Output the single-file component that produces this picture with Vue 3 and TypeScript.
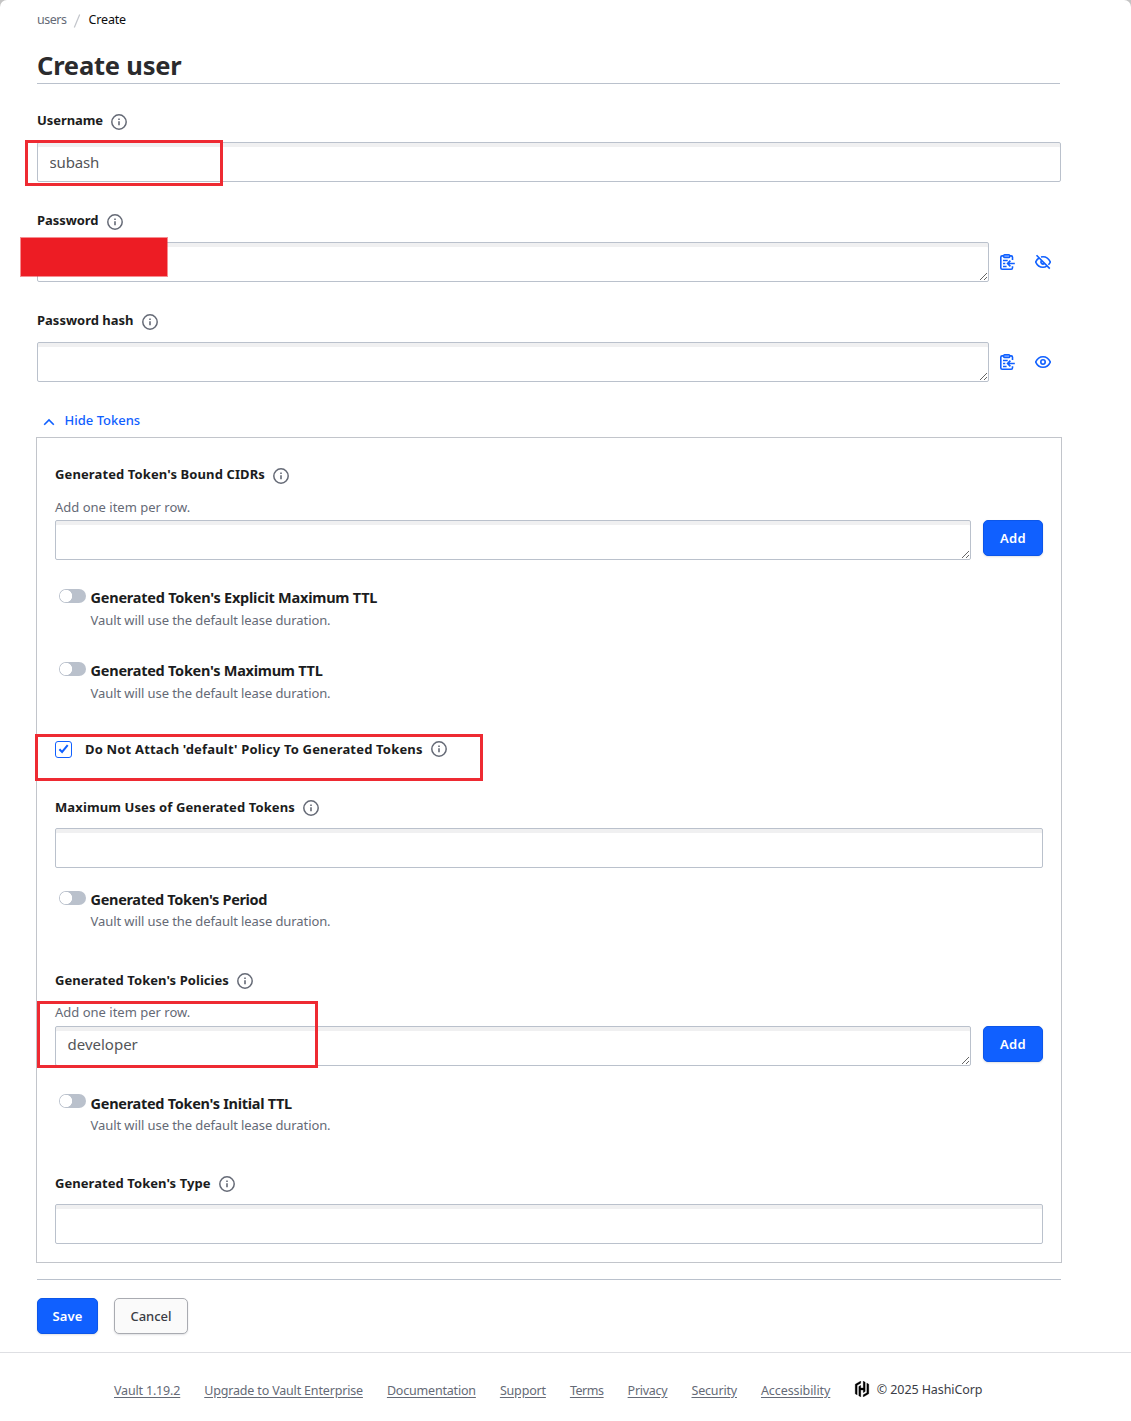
<script setup lang="ts">
import { ref, h, type FunctionalComponent } from 'vue'

// Small "i in a circle" hint icon shown after labels
const InfoIcon: FunctionalComponent = () =>
  h('svg', { class: 'info', width: 16, height: 16, viewBox: '0 0 16 16', fill: 'none' }, [
    h('circle', { cx: 8, cy: 8, r: 7.2, stroke: '#656a76', 'stroke-width': 1.5 }),
    h('path', { d: 'M8 7.3v4', stroke: '#656a76', 'stroke-width': 1.6 }),
    h('path', { d: 'M7.2 4.4h1.6v1.5H7.2z', fill: '#656a76' }),
  ])

interface Tracked { text: string; ls: number }
interface Secret { label: Tracked; value: string; visible: boolean }

const username = ref('subash')
const policies = ref('developer')
const cidrs = ref('')
const maxUses = ref('')
const tokenType = ref('')
const noDefault = ref(true)

const secrets = ref<Secret[]>([
  { label: { text: 'Password', ls: -0.05 }, value: '', visible: false },
  { label: { text: 'Password hash', ls: 0 }, value: '', visible: true },
])

const maxTtls: Tracked[] = [
  { text: "Generated Token's Explicit Maximum TTL", ls: -0.24 },
  { text: "Generated Token's Maximum TTL", ls: -0.26 },
]

const links: Tracked[] = [
  { text: 'Vault 1.19.2', ls: -0.17 },
  { text: 'Upgrade to Vault Enterprise', ls: -0.17 },
  { text: 'Documentation', ls: -0.19 },
  { text: 'Support', ls: -0.17 },
  { text: 'Terms', ls: -0.45 },
  { text: 'Privacy', ls: -0.26 },
  { text: 'Security', ls: -0.18 },
  { text: 'Accessibility', ls: -0.09 },
]

const track = (ls: number) => ({ letterSpacing: ls + 'px' })
</script>

<template>
  <div class="page">
    <main class="content">
      <nav class="crumbs">
        <a class="crumb">users</a><svg class="slash" width="8" height="14" viewBox="0 0 8 14"><path d="M1.3 13.5 6.7.5" stroke="#c2c5cb" stroke-width="1.2" /></svg><span class="crumb current">Create</span>
      </nav>
      <h1>Create user</h1>

      <div class="field">
        <div class="label low"><span :style="track(-0.07)">Username</span><InfoIcon /></div>
        <input v-model="username" class="control" type="text" />
      </div>

      <div v-for="s in secrets" :key="s.label.text" class="field">
        <div class="label low"><span :style="track(s.label.ls)">{{ s.label.text }}</span><InfoIcon /></div>
        <div class="secret">
          <textarea v-model="s.value" class="control"></textarea>
          <div class="icons">
            <svg width="16" height="16" viewBox="0 0 16 16" fill="none" stroke="#1060ff" stroke-width="1.6">
              <path d="M5 1.900H3.100c-.9 0-1.300.5-1.300 1.300v10.600c0 .9.5 1.400 1.300 1.400h9.100c.9 0 1.300-.5 1.300-1.400v-1.600M11 1.900h1.200c.9 0 1.300.5 1.300 1.300v2.700" />
              <rect x="4.700" y=".8" width="6" height="2.700" rx=".8" fill="#8cb2ff" stroke-width="1.400" />
              <path d="M4 6.500h4.700M4 9.500h2.300M4 12.400h3.600" stroke-width="1.500" />
              <path d="M15.800 9.500H9M11.400 6.600 8.600 9.500l2.800 2.900" stroke-width="1.700" />
            </svg>
            <svg v-if="s.visible" width="16" height="16" viewBox="0 0 16 16" fill="none" stroke="#1060ff" stroke-width="1.6">
              <path d="M.7 8C2.200 4.600 4.900 2.800 8 2.800s5.800 1.800 7.300 5.200c-1.500 3.400-4.200 5.200-7.300 5.200S2.200 11.400.7 8z" />
              <circle cx="8" cy="8" r="2.200" />
            </svg>
            <svg v-else width="16" height="16" viewBox="0 0 16 16" fill="none" stroke="#1060ff" stroke-width="1.6">
              <path d="M6 3.100c.7-.2 1.300-.3 2-.3 3.100 0 5.800 1.800 7.300 5.200-.5 1.100-1.100 2-1.900 2.800M4 4C2.600 4.900 1.500 6.200.7 8c1.500 3.400 4.200 5.200 7.300 5.200 1.400 0 2.700-.4 3.800-1.100" />
              <path d="M6.300 6.600a2.200 2.200 0 0 0 3 3.100M1.500 1.200l13.300 13.400" />
            </svg>
          </div>
        </div>
      </div>

      <button class="disclosure" type="button">
        <svg width="12" height="12" viewBox="0 0 12 12" fill="none" stroke="#1060ff" stroke-width="1.6"><path d="M1.200 8.800 6 3.900l4.800 4.900" /></svg>
        <span>Hide Tokens</span>
      </button>

      <section class="tokens">
        <div class="label low"><span :style="track(0.11)">Generated Token's Bound CIDRs</span><InfoIcon /></div>
        <p class="help first">Add one item per row.</p>
        <div class="adder">
          <textarea v-model="cidrs" class="control"></textarea>
          <button class="btn primary add" type="button">Add</button>
        </div>

        <div v-for="t in maxTtls" :key="t.text" class="ttl">
          <span class="switch"></span>
          <div><h3 :style="track(t.ls)">{{ t.text }}</h3><p>Vault will use the default lease duration.</p></div>
        </div>

        <div class="check-row">
          <button class="checkbox" type="button" role="checkbox" :aria-checked="noDefault" @click="noDefault = !noDefault">
            <svg v-if="noDefault" width="15" height="15" viewBox="0 0 15 15" fill="none" stroke="#1060ff" stroke-width="2"><path d="m3.400 7.200 2.700 2.700 5.600-6.700" /></svg>
          </button>
          <div class="label"><span :style="track(0.18)">Do Not Attach 'default' Policy To Generated Tokens</span><InfoIcon /></div>
        </div>

        <div class="label mid uses"><span :style="track(0.11)">Maximum Uses of Generated Tokens</span><InfoIcon /></div>
        <input v-model="maxUses" class="control" type="text" />

        <div class="ttl period">
          <span class="switch"></span>
          <div><h3 :style="track(-0.33)">Generated Token's Period</h3><p>Vault will use the default lease duration.</p></div>
        </div>

        <div class="label mid"><span :style="track(0.06)">Generated Token's Policies</span><InfoIcon /></div>
        <p class="help">Add one item per row.</p>
        <div class="adder">
          <textarea v-model="policies" class="control"></textarea>
          <button class="btn primary add" type="button">Add</button>
        </div>

        <div class="ttl initial">
          <span class="switch"></span>
          <div><h3 :style="track(-0.29)">Generated Token's Initial TTL</h3><p>Vault will use the default lease duration.</p></div>
        </div>

        <div class="label mid type"><span :style="track(0.06)">Generated Token's Type</span><InfoIcon /></div>
        <input v-model="tokenType" class="control" type="text" />
      </section>

      <div class="actions">
        <button class="btn primary save" type="button">Save</button>
        <button class="btn secondary" type="button">Cancel</button>
      </div>
    </main>

    <footer>
      <a v-for="l in links" :key="l.text" :style="track(l.ls)">{{ l.text }}</a>
      <span class="brand">
        <svg width="16" height="16" viewBox="0 0 24 24" fill="#000" stroke="#000" stroke-width=".4">
          <path d="M10.167 0 1.814 4.824v14.354l2.941 1.698V6.520l5.412-3.126zM13.833 24l8.353-4.824V4.822l-2.941-1.698V17.480l-5.412 3.126zM13.833 0v10.400h-3.666V6.516L7.226 8.214v14.086L10.167 24V13.621h3.666v3.863l2.941-1.698V1.698z" />
        </svg>
        <span>© 2025 HashiCorp</span>
      </span>
    </footer>

    <div class="mark mark-user"></div>
    <div class="redact"></div>
    <div class="mark mark-default"></div>
    <div class="mark mark-policy"></div>
  </div>
</template>

<style>
body { margin: 0; background: #c4c4c4; }
</style>

<style scoped>
* { box-sizing: border-box; }
.page {
  position: relative;
  height: 1421px;
  overflow: hidden;
  background: #fff;
  border-radius: 7px 7px 0 0;
  font: 13px/20px "Noto Sans", sans-serif;
  color: #1b1c20;
}
.content { width: 1024px; margin-left: 37px; }
h1, h3, p { margin: 0; }
button, input, textarea { font-family: inherit; margin: 0; }

.crumbs { display: flex; align-items: center; height: 39px; font-size: 12.5px; }
.crumb { color: #656a76; letter-spacing: -0.48px; width: 30px; }
.crumb.current { color: #0c0c0e; letter-spacing: -0.16px; width: auto; }
.slash { margin: 2px 7.500px 0 6px; }

h1 {
  width: 1023px;
  height: 45px;
  padding-top: 9px;
  border-bottom: 1px solid #bac1cc;
  font-size: 25.5px;
  line-height: 34px;
  font-weight: 700;
  letter-spacing: -0.2px;
  color: #2b2b2d;
  margin-bottom: 18px;
}

.field { margin-bottom: 20px; }
.field .label { margin-bottom: 4px; }
.label { display: flex; align-items: center; gap: 8px; height: 36px; font-weight: 700; white-space: nowrap; }
.info { display: block; flex: none; position: relative; }
.low .info { top: 2px; }
.mid .info { top: 1px; }

.control {
  display: block;
  width: 100%;
  height: 40px;
  padding: 8px 11.500px;
  border: 1px solid #bac1cc;
  border-radius: 2px;
  box-shadow: inset 0 4px 0 #f0f0f1;
  background: #fff;
  font-size: 15px;
  line-height: 22px;
  color: #535558;
  outline: none;
}
input.control { letter-spacing: -0.15px; }
textarea.control { padding-top: 6px; overflow: hidden; resize: vertical; }

.secret { display: flex; width: 1024px; }
.secret .control { width: 952px; flex: none; }
.icons { display: flex; align-items: center; gap: 20px; padding-left: 10px; }

.disclosure {
  display: flex;
  align-items: center;
  gap: 9.500px;
  height: 35px;
  padding: 0 0 0 6px;
  border: 0;
  background: none;
  font-size: 13px;
  line-height: 20px;
  font-weight: 500;
  color: #1060ff;
}
.disclosure svg { position: relative; top: 2px; }

.tokens { width: 1026px; height: 826px; margin-left: -1px; padding: 18px; border: 1px solid #c2c5cb; }
.help { height: 28px; line-height: 28px; color: #656a76; }
.help.first { line-height: 30px; }
.adder { display: flex; align-items: flex-start; gap: 12px; }
.adder .control { width: 916px; flex: none; }

.btn {
  height: 36px;
  padding: 0;
  border-radius: 5px;
  font-size: 13px;
  line-height: 20px;
  box-shadow: 0 1px 2px rgba(101, 106, 118, .2);
}
.primary { background: #1060ff; border: 1px solid #0c56e9; color: #fff; font-weight: 600; }
.secondary { width: 74px; background: #fafafa; border: 1px solid #a9abb1; color: #3b3d45; font-weight: 500; }
.add { width: 60px; letter-spacing: .3px; }
.save { width: 61px; letter-spacing: .1px; }

.ttl { display: flex; gap: 4.600px; height: 73px; padding-left: 4px; }
.tokens .adder + .ttl { margin-top: 26px; }
.switch {
  flex: none;
  width: 27px;
  height: 14px;
  margin-top: 3px;
  border-radius: 7px;
  background: radial-gradient(circle at 7px 7px, #fff 5.800px, #bac1cc 6.500px);
}
.ttl h3 { height: 24px; font-size: 14.5px; line-height: 22px; font-weight: 700; }
.ttl p { color: #656a76; letter-spacing: -0.09px; }

.check-row { display: flex; align-items: center; height: 20px; margin-top: 7px; }
.checkbox { display: block; width: 17px; height: 17px; padding: 0; margin-right: 13px; border: 1px solid #1060ff; border-radius: 3px; background: #fff; }
.checkbox svg { display: block; }
.uses { margin: 30px 0 3px; }
.ttl.period { margin-top: 20px; height: 74px; }
.ttl.period h3 + p, .ttl.initial h3 + p { margin-top: -1px; }
.ttl.initial { height: 73px; }
.initial .switch { margin-top: 2px; }
.type { margin-bottom: 3px; }

.actions { display: flex; gap: 16px; margin-top: 16px; padding-top: 18px; height: 73px; border-top: 1px solid #bac1cc; }

footer {
  display: flex;
  gap: 24px;
  height: 69px;
  padding: 28px 0 0 114px;
  border-top: 1px solid #dedfe3;
  font-size: 12.5px;
  white-space: nowrap;
}
footer a { color: #656a76; text-decoration: underline; text-underline-offset: 2px; }
.brand { display: flex; gap: 7px; color: #3b3d45; letter-spacing: -0.09px; position: relative; top: -1px; left: -.5px; }
.brand svg { margin-top: 1px; }

.mark { position: absolute; border: 3px solid #ee2a32; }
.mark-user { left: 25px; top: 140px; width: 198px; height: 46px; }
.mark-default { left: 35px; top: 734px; width: 448px; height: 47px; }
.mark-policy { left: 37px; top: 1001px; width: 281px; height: 67px; }
.redact { position: absolute; left: 21px; top: 238px; width: 146px; height: 38px; background: #ed1c24; box-shadow: 0 0 0 1px rgba(237, 28, 36, .5); }
</style>
